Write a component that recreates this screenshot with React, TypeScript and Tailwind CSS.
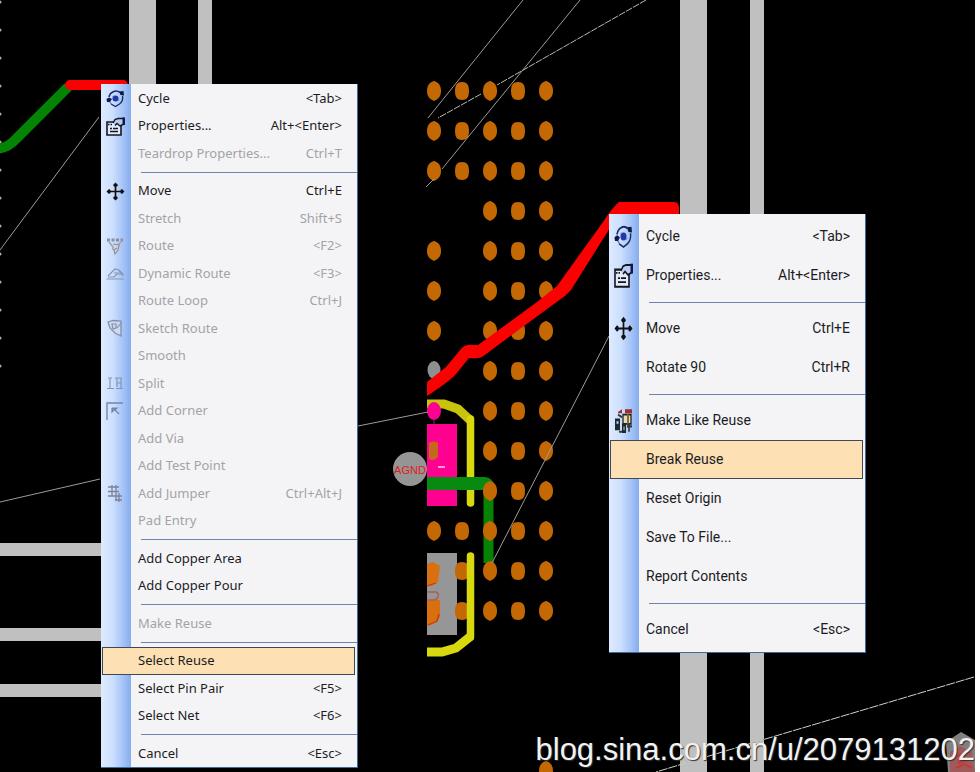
import { ReactNode } from 'react';
import clsx from 'clsx';

interface Item {
  label: string;
  keys?: string;
  icon?: ReactNode;
  disabled?: boolean;
  active?: boolean;
}

/* ---------- Icons ---------- */

const CycleIcon = () => (
  <>
    <path d="M3 8 A7 7 0 0 1 14 3.500" fill="none" stroke="#1c2a6b" strokeWidth="1.5" />
    <path d="M16.500 7 A8 8 0 0 1 13.500 15 L9.500 17.500 L5 15" fill="none" stroke="#1c2a6b" strokeWidth="1.4" />
    <path d="M3 10 A7 7 0 0 0 5.500 15" fill="none" stroke="#5d78c4" strokeWidth="1.2" />
    <path d="M13 2.500 L17.500 2 L18 6.500 L14.500 6 Z M0.500 10 L3 8.500 L6 10 L4 13 H1 Z" fill="#10184a" />
    <circle cx="9.500" cy="9.500" r="3" fill="#2338a8" />
    <path d="M6 8 L8 6.500 M12 12 L13.500 10.500" stroke="#7d93de" strokeWidth="1" />
  </>
);

const PropertiesIcon = () => (
  <>
    <path d="M1 5 H15 V18 H1 Z" fill="#e3ebfb" stroke="#15151c" strokeWidth="1.6" />
    <path d="M2 7.500 H7" stroke="#15151c" strokeWidth="1.5" strokeDasharray="1.5 1" />
    <path d="M4 11.500 H6 M7 11.500 H12 M4 14.500 H12" stroke="#15151c" strokeWidth="1.4" />
    <path d="M7 6 L9 2.500 L12 1.500 H18 V7 L14 9 L11 6.500 L9 8.500" fill="#b9cdf2" stroke="#15151c" strokeWidth="1.4" />
    <path d="M16.500 0.500 H19 V8 H16.500 Z" fill="#10184a" />
  </>
);

const MoveIcon = () => (
  <>
    <path d="M9.500 3 V16 M3 9.500 H16" stroke="#111" strokeWidth="1.7" />
    <path d="M9.500 0.500 L12 3 L11 4.500 H8 L7 3 Z M9.500 18.500 L12 16 L11 14.500 H8 L7 16 Z M0.500 9.500 L3 7 L4.500 8 V11 L3 12 Z M18.500 9.500 L16 7 L14.500 8 V11 L16 12 Z" fill="#111" />
  </>
);

const RouteIcon = () => (
  <>
    <path d="M1 3 H17" stroke="#8d8f9c" strokeWidth="3" strokeDasharray="3 1.5" />
    <path d="M3 5 L7 10 V13 M15 5 L12 8" fill="none" stroke="#9a9ca8" strokeWidth="1.4" />
    <path d="M7 7 L13 8 L12 13 L9 17 L8 13 L11 11" fill="#d8d4d8" stroke="#8d8f9c" strokeWidth="1.2" />
  </>
);

const DynamicRouteIcon = () => (
  <>
    <path d="M0.500 15 H18 M2 12 L9 5 L13 6 L17 10 H11 L8 13 H2" fill="none" stroke="#8796b5" strokeWidth="1.2" />
    <path d="M8 9 H13 M13 7 L17 12" stroke="#8796b5" strokeWidth="1.2" />
  </>
);

const SketchRouteIcon = () => (
  <>
    <path d="M2 3 L7 1.500 L15 2 V17 L9 14 L4 9 Z" fill="#cfd9ee" stroke="#8290ab" strokeWidth="1.3" />
    <path d="M6 5 H10 V9 L7 10 Z M11 9 L15 4" fill="none" stroke="#8290ab" strokeWidth="1.2" />
  </>
);

const SplitIcon = () => (
  <path d="M2 4 H6 M4 4 V14 M1 14.500 H8 M9 4 H16 M10 14.500 H17 M11 4 V13 M15 4 V14 M11 9 H15" fill="none" stroke="#8796b5" strokeWidth="1.2" />
);

const CornerIcon = () => (
  <>
    <path d="M1 18 V1 H17" fill="none" stroke="#7585a5" strokeWidth="1.4" />
    <path d="M6 6 H11 L9 8 L13 12 M6 6 V10 L8 8" fill="#7585a5" stroke="#7585a5" strokeWidth="1.2" />
  </>
);

const JumperIcon = () => (
  <path d="M2 3 H13 M2 7.500 H13 M2 12 H16 M9 16 H16 M6 1 V12 M10 1 V17 M13 9 V18" fill="none" stroke="#7f8298" strokeWidth="1.3" />
);

const ReuseIcon = () => (
  <>
    <path d="M4 3 L8 1 V4 H4 Z M11 1 H18 V4 H11 Z" fill="#a32c2c" />
    <path d="M9 5 H17 V12 H9 Z" fill="#e5dcb4" stroke="#222" strokeWidth="1.3" />
    <path d="M14 5 V12" stroke="#8b6a3c" strokeWidth="2" />
    <path d="M1 8 H6 V17 H1 Z M8 12 H12 V19 H8 Z" fill="#1c2a2a" />
    <path d="M2.500 10 H4.500 V12 H2.500 Z M9.500 14 H10.500 V17 H9.500 Z" fill="#bdd6ef" />
    <path d="M4 5 L8 7 M13 14 H18 M15 12 V18 M5 18 H8" stroke="#2f3a3a" strokeWidth="1.6" />
  </>
);

/* ---------- Menu content ---------- */

const traceMenu: Item[][] = [
  [
    { label: 'Cycle', keys: '<Tab>', icon: <CycleIcon /> },
    { label: 'Properties...', keys: 'Alt+<Enter>', icon: <PropertiesIcon /> },
    { label: 'Teardrop Properties...', keys: 'Ctrl+T', disabled: true },
  ],
  [
    { label: 'Move', keys: 'Ctrl+E', icon: <MoveIcon /> },
    { label: 'Stretch', keys: 'Shift+S', disabled: true },
    { label: 'Route', keys: '<F2>', icon: <RouteIcon />, disabled: true },
    { label: 'Dynamic Route', keys: '<F3>', icon: <DynamicRouteIcon />, disabled: true },
    { label: 'Route Loop', keys: 'Ctrl+J', disabled: true },
    { label: 'Sketch Route', icon: <SketchRouteIcon />, disabled: true },
    { label: 'Smooth', disabled: true },
    { label: 'Split', icon: <SplitIcon />, disabled: true },
    { label: 'Add Corner', icon: <CornerIcon />, disabled: true },
    { label: 'Add Via', disabled: true },
    { label: 'Add Test Point', disabled: true },
    { label: 'Add Jumper', keys: 'Ctrl+Alt+J', icon: <JumperIcon />, disabled: true },
    { label: 'Pad Entry', disabled: true },
  ],
  [{ label: 'Add Copper Area' }, { label: 'Add Copper Pour' }],
  [{ label: 'Make Reuse', disabled: true }],
  [
    { label: 'Select Reuse', active: true },
    { label: 'Select Pin Pair', keys: '<F5>' },
    { label: 'Select Net', keys: '<F6>' },
  ],
  [{ label: 'Cancel', keys: '<Esc>' }],
];

const reuseMenu: Item[][] = [
  [
    { label: 'Cycle', keys: '<Tab>', icon: <CycleIcon /> },
    { label: 'Properties...', keys: 'Alt+<Enter>', icon: <PropertiesIcon /> },
  ],
  [
    { label: 'Move', keys: 'Ctrl+E', icon: <MoveIcon /> },
    { label: 'Rotate 90', keys: 'Ctrl+R' },
  ],
  [
    { label: 'Make Like Reuse', icon: <ReuseIcon /> },
    { label: 'Break Reuse', active: true },
    { label: 'Reset Origin' },
    { label: 'Save To File...' },
    { label: 'Report Contents' },
  ],
  [{ label: 'Cancel', keys: '<Esc>' }],
];

function ContextMenu({ groups, tall, className }: { groups: Item[][]; tall?: boolean; className: string }) {
  return (
    <div
      role="menu"
      className={clsx(
        'absolute flex w-[257px] flex-col border-r border-b border-[#3f6a9c] bg-[linear-gradient(to_right,#deeaff_0px,#cbdffe_12px,#86adf0_30px,#f4f4f7_30px)]',
        className,
      )}
    >
      {groups.map((group, i) => (
        <div key={i} className="contents">
          {i > 0 && (
            <div role="separator" className={clsx('flex shrink-0 items-center pl-10', tall ? 'h-[14px]' : 'h-[10px]')}>
              <div className="h-px w-full bg-[#6d85ad]" />
            </div>
          )}
          {group.map((item) => (
            <button
              key={item.label}
              type="button"
              role="menuitem"
              disabled={item.disabled}
              className={clsx(
                'mr-0.5 ml-px flex items-center border text-left whitespace-nowrap',
                tall
                  ? 'h-[39px] font-["Roboto",sans-serif] text-[14px]'
                  : 'min-h-0 flex-1 font-["Noto_Sans",sans-serif] text-[13px]',
                item.active ? 'border-[#3d4a52] bg-[#fde0b4]' : 'border-transparent',
                item.disabled ? 'text-[#a3a3a6]' : 'text-[#1c1c1f]',
              )}
            >
              <span className="flex w-[35px] shrink-0 pl-[3px]">
                {item.icon && (
                  <svg
                    viewBox="0 0 19 19"
                    preserveAspectRatio="none"
                    className={clsx('w-[19px]', tall ? 'h-[25px]' : 'h-[19px]')}
                    aria-hidden="true"
                  >
                    {item.icon}
                  </svg>
                )}
              </span>
              <span className="flex-1">{item.label}</span>
              <span className="pr-3">{item.keys}</span>
            </button>
          ))}
        </div>
      ))}
    </div>
  );
}

/* ---------- Board ---------- */

const allColumns = [434, 462, 490, 518, 546];

const pinRows: { y: number; xs: number[] }[] = [
  { y: 91, xs: allColumns },
  { y: 131, xs: allColumns },
  { y: 171, xs: allColumns },
  { y: 211, xs: [490, 518, 546] },
  { y: 251, xs: [434, 490, 518, 546] },
  { y: 291, xs: [434, 490, 518, 546] },
  { y: 331, xs: [434, 490, 518, 546] },
  { y: 371, xs: [490, 518, 546] },
  { y: 411, xs: [490, 518, 546] },
  { y: 451, xs: [490, 518, 546] },
  { y: 491, xs: [490, 518, 546] },
  { y: 531, xs: allColumns },
  { y: 571, xs: [462, 490, 518, 546] },
  { y: 611, xs: [462, 490, 518, 546] },
  { y: 771, xs: [546] },
];

const edgeTicks = Array.from({ length: 14 }, (_, i) => 2 + i * 28);

function Pin({ x, y }: { x: number; y: number }) {
  // every other column has slightly pointed ends
  const d =
    x === 462 || x === 518
      ? 'M-7 0 C-7 -6 -5 -9 0 -9 C5 -9 7 -6 7 0 C7 6 5 9 0 9 C-5 9 -7 6 -7 0 Z'
      : 'M-7 0 C-7 -6 -4 -9 0 -10 C4 -9 7 -6 7 0 C7 6 4 8 0 10 C-4 8 -7 6 -7 0 Z';
  return <path d={d} transform={`translate(${x} ${y})`} fill="#c46804" />;
}

function Board() {
  return (
    <svg
      viewBox="0 0 975 772"
      preserveAspectRatio="xMinYMin slice"
      className="absolute inset-0 size-full"
      aria-hidden="true"
    >
      {/* Board outlines */}
      <g fill="#c0c0c0">
        <rect x="129" y="0" width="27" height="90" />
        <rect x="198" y="0" width="14" height="90" />
        <rect x="680" y="0" width="27" height="772" />
        <rect x="750" y="0" width="14" height="772" />
        <rect x="0" y="543" width="110" height="13" />
        <rect x="0" y="628" width="110" height="13" />
        <rect x="0" y="684" width="110" height="13" />
      </g>
      {edgeTicks.map((y) => (
        <circle key={y} cx="0" cy={y} r="1.5" fill="#c9a9a0" />
      ))}

      {/* Left trace */}
      <path d="M-4 149 Q8 148 16 139 L68 87" fill="none" stroke="#048404" strokeWidth="10" />
      <path d="M70 85 H123" stroke="#fb0000" strokeWidth="10" strokeLinecap="round" />

      {/* Component pads */}
      <rect x="427" y="424" width="30" height="82" fill="#ff0090" />
      <rect x="427" y="553" width="30" height="82" fill="#969696" />
      <path d="M429 443 Q434 440 438 443 V457 Q434 462 429 459 Z" fill="#c4681c" />
      <path d="M438 467 H445" stroke="#ff9ad2" strokeWidth="2" />
      <path d="M427 404 H444 L458 409 L471 421" fill="none" stroke="#c8c40c" strokeWidth="9" />
      <path d="M470.500 419 V503" stroke="#d8d80e" strokeWidth="7.500" strokeLinecap="round" />
      <ellipse cx="434" cy="411" rx="7" ry="9" fill="#ff0090" />
      <path d="M434 419 V425" stroke="#8a2c62" strokeWidth="1" />
      <path d="M427 483.500 H484 Q489 484 489 490" fill="none" stroke="#088a10" strokeWidth="13" />
      <path d="M488.500 484 V563" stroke="#068206" strokeWidth="10" />
      <ellipse cx="434" cy="370" rx="6.500" ry="9" fill="#8c9090" />

      {pinRows.map((row) => row.xs.map((x) => <Pin key={`${x}-${row.y}`} x={x} y={row.y} />))}

      <path d="M427 564 L433 562 L440 566 L438 582 L432 586 H427 Z M427 600 H440 V617 L437 622 L428 626 H427 Z" fill="#d9700f" />
      <path d="M427 592 H436 Q439 593 438 597 Q437 600 433 600 H427" fill="none" stroke="#a8605c" strokeWidth="1.500" />
      <path d="M428 625 L437 621 L439 614 M427 586 L436 583" fill="none" stroke="#c33a12" strokeWidth="1.200" />
      <path d="M470.500 556 V637" stroke="#d8d80e" strokeWidth="7.500" strokeLinecap="round" />
      <path d="M471 636 L456 648 L442 652 H427" fill="none" stroke="#d8d80e" strokeWidth="9" />

      {/* Ratsnest */}
      <g stroke="#a09a94" strokeWidth="1">
        <path d="M99 117 L0 250" />
        <path d="M0 502 L100 479" />
        <path d="M358 426 L428 412" />
        <path d="M523 0 L428 118" />
        <path d="M580 0 L442 169 M434 179 L426 187" />
        <path d="M646 0 L497 85 M481 94 L438 118" strokeDasharray="7 1" stroke="#b8b8ac" />
        <path d="M609 336 L492 563" />
        <path d="M974 677 L762 740 L656 772" strokeDasharray="9 1" stroke="#d0d0c4" />
      </g>

      {/* Reuse trace */}
      <path
        d="M427 382 L446 367 L461 349 Q465 344 474 345 L478 345 L537 302 L557 286 L603 222 Q612 208 619 202 H674 Q679 202 679 208 V220 H615 L571 290 Q566 296 558 301 L482 357 Q478 359 469 358 L456 374 Q450 381 427 396 Z"
        fill="#fb0000"
      />

      <circle cx="410" cy="469" r="17" fill="#959595" />
      <text x="410" y="474" textAnchor="middle" fontFamily="Liberation Sans, sans-serif" fontSize="11" fill="#e01c1c">
        AGND
      </text>

      {/* Net symbol in the corner */}
      <path d="M961 732 L975 740 V772 H948 L946 742 Z" fill="#858080" />
      <path d="M950 752 L960 746 L972 752 L975 772 H950 Z" fill="#a05a5a" />
      <path d="M953 758 L961 754 L959 763 L970 759 M956 768 L964 764 L972 768" fill="none" stroke="#c23a3a" strokeWidth="2" />
    </svg>
  );
}

export default function App() {
  return (
    <div className="min-h-screen bg-white pr-[5px]">
      <main className="relative min-h-screen overflow-hidden bg-black">
        <Board />
        <ContextMenu groups={traceMenu} className="top-[84px] left-[101px] h-[684px] pt-px" />
        <ContextMenu groups={reuseMenu} tall className="top-[214px] left-[609px] py-[3px]" />
        <p className="absolute right-0 bottom-1 font-['Liberation_Sans',sans-serif] text-[31px] leading-9 whitespace-nowrap text-[#f2f2f2] [text-shadow:1px_1px_1px_#333]">
          blog.sina.com.cn/u/2079131202
        </p>
      </main>
    </div>
  );
}
